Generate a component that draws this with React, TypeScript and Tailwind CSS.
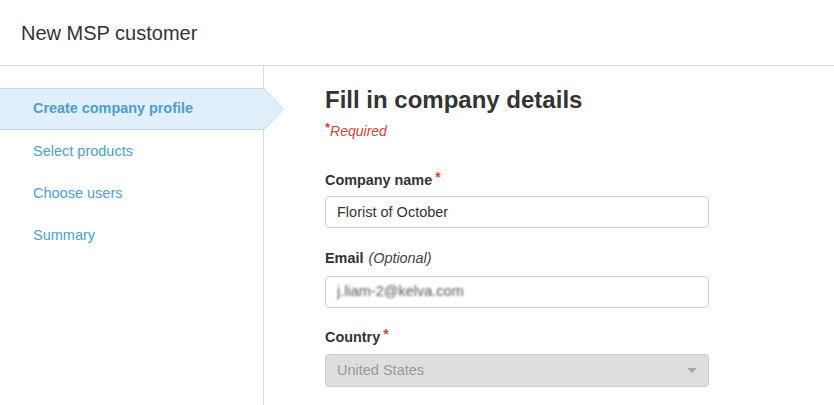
import React from 'react';

const steps = ['Create company profile', 'Select products', 'Choose users', 'Summary'];

const Sidebar: React.FC<{ active: number }> = ({ active }) => {
  return (
    <aside className="w-[264px] shrink-0 border-r border-[#dcdcdc] pt-[22px]">
      {steps.map((s, i) =>
        i === active ? (
          <div
            key={s}
            className="relative h-[42px] bg-[#e1effa] border-y border-[#bddcf1] pl-[33px] flex items-center text-[14.4px] font-bold text-[#4c9fcf]"
          >
            {s}
            <svg className="absolute left-[263px] top-[-1px]" width="22" height="42" viewBox="0 0 22 42">
              <polygon points="0,0 1,0 21,21 1,42 0,42" fill="#e1effa" />
              <polyline points="0,0.5 1,0.5 20.5,21 1,41.5 0,41.5" fill="none" stroke="#bddcf1" strokeWidth="1" />
            </svg>
          </div>
        ) : (
          <div key={s} className="h-[42px] pl-[33px] flex items-center text-[14.5px] text-[#4c9fcf] pt-px">
            {s}
          </div>
        )
      )}
    </aside>
  );
};

const Label: React.FC<{ text: string; required?: boolean; optional?: boolean }> = ({ text, required, optional }) => (
  <div className="h-5 flex items-center text-[14.4px] font-bold text-[#333]">
    {text}
    {required && <span className="text-[#d9413a] ml-[3px] relative top-[-4px] text-[14px]">*</span>}
    {optional && <span className="ml-[5px] font-normal italic text-[#444]">(Optional)</span>}
  </div>
);

export default function App() {
  return (
    <div className="w-[834px] h-[405px] overflow-hidden bg-white font-['Liberation_Sans',Arial,sans-serif] text-[#333] flex flex-col">
      <header className="h-[66px] shrink-0 border-b border-[#dcdcdc] flex items-center pl-[21px]">
        <h1 className="text-[20px] text-[#333]">New MSP customer</h1>
      </header>
      <div className="flex flex-1">
        <Sidebar active={0} />
        <main className="pl-[61px] pt-5 flex-1">
          <h2 className="text-[24px] leading-7 font-bold text-[#333]">Fill in company details</h2>
          <div className="mt-[8px] h-[18px] flex items-center text-[14px] italic text-[#d9413a]">
            <span className="not-italic font-bold relative -top-[3px] text-[13px]">*</span>Required
          </div>

          <div className="mt-[31px]">
            <Label text="Company name" required />
          </div>
          <div className="mt-[5px] w-[384px] h-[32px] border border-[#cccccc] rounded-[4px] flex items-center px-[11px] pt-px text-[14.5px] text-[#333]">
            Florist of October
          </div>

          <div className="mt-[21px]">
            <Label text="Email" optional />
          </div>
          <div className="mt-[7px] w-[384px] h-[32px] border border-[#cccccc] rounded-[4px] flex items-center px-[11px] text-[14.5px] overflow-hidden">
            <span className="text-[#555] blur-[1px]">j.liam-2@kelva.com</span>
          </div>

          <div className="mt-[20px]">
            <Label text="Country" required />
          </div>
          <div className="mt-[6px] w-[384px] h-[33px] border border-[#cccccc] rounded-[4px] bg-[#dedede] flex items-center justify-between pl-[11px] pr-[11px] text-[14.5px] text-[#9a9a9a]">
            <span>United States</span>
            <svg width="10" height="6" viewBox="0 0 10 6">
              <polygon points="0,0 10,0 5,5" fill="#a6a6a6" />
            </svg>
          </div>
        </main>
      </div>
    </div>
  );
}
